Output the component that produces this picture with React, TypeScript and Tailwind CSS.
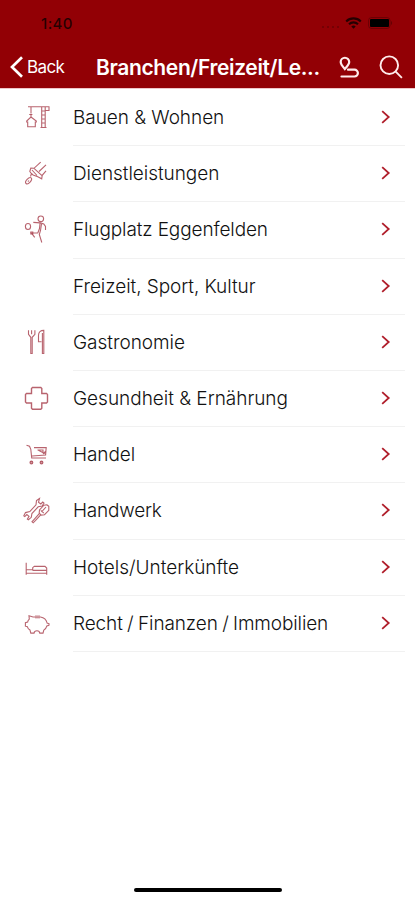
import React from "react";

type Row = { label: string; spacing: string; icon?: React.ReactNode };

const rows: Row[] = [
  {
    label: "Bauen & Wohnen",
    spacing: "tracking-[-0.05px]",
    icon: (
      <>
        <path d="M5 3.7H26.5M18.7 3.7V24.5M22.2 3.7V24.5M18.7 8h3.5M18.7 12h3.5M18.7 16h3.5M18.7 20h3.5M17.5 24.5h6M22.5 7.5h3.5V4M8 4v6.5M6.2 11.5h3.2" />
        <path d="M8 11.5v2.5L3.7 18v1h1v4.7h7.6V19h1v-1L8 14" />
      </>
    ),
  },
  {
    label: "Dienstleistungen",
    spacing: "tracking-[-0.05px]",
    icon: (
      <>
        <path d="M17.7 3.2L11 9.3 7.8 9l-1 3.5 1.6 2 1.7 1.5 4.7 1.8 3.9 2 .5-3.5L23 11.8M23 5.8l-7 6.7M11 9.3l8 7.3M9 11l5 5.5M8.5 14.5l-1 3" />
        <ellipse cx="5.6" cy="21.7" rx="2" ry="3.8" transform="rotate(42 5.6 21.7)" />
        <path d="M4.9 22.6l1-1.1" />
      </>
    ),
  },
  {
    label: "Flugplatz Eggenfelden",
    spacing: "tracking-[-0.12px]",
    icon: (
      <>
        <ellipse cx="5" cy="11.5" rx="2.6" ry="3" />
        <circle cx="17.8" cy="3.8" r="2.8" />
        <path d="M10.3 7.4l7 .5 3.5 1 1.7 2.5V15M17 8.5l-.5 5-1.7 4.5H8.5l3.2 4.3M18.5 9l-1 6.5-1.2 4 2.5 8" />
        <path d="M7.8 17h2v2h-2z" />
      </>
    ),
  },
  { label: "Freizeit, Sport, Kultur", spacing: "tracking-[-0.06px]" },
  {
    label: "Gastronomie",
    spacing: "tracking-[-0.03px]",
    icon: (
      <path d="M5.5 2.3v4l2.3 3v16.2h1.4V9.3l2.7-3v-4M8.6 2.3v4M18.5 13.8h-3V7.2c0-3 2-4.8 5.3-4.8v23.1h-1.4V5" />
    ),
  },
  {
    label: "Gesundheit & Ernährung",
    spacing: "tracking-[-0.02px]",
    icon: <path strokeWidth="1.4" d="M9.5 3.5h8.3l1 1v5h4.7l1 1V18l-1 1h-4.7v5.3l-1 1H9.5l-1-1V19H3.5l-1-1v-7.5l1-1h5v-5z" />,
  },
  {
    label: "Handel",
    spacing: "tracking-[-0.1px]",
    icon: (
      <>
        <path d="M3.5 5.3l3 1 1.3 3L8.7 18H23M11 7.6h12.2l-.6 7.4L9 16M14.5 10h5.5v3M15 10l7.5 4M20 14l3-3" />
        <circle cx="8.4" cy="22.5" r="1.4" fill="#a63c4a" fillOpacity=".5" />
        <circle cx="18.5" cy="22.5" r="1.4" fill="#a63c4a" fillOpacity=".5" />
      </>
    ),
  },
  {
    label: "Handwerk",
    spacing: "tracking-[-0.22px]",
    icon: (
      <>
        <path d="M16.5 2.5l-3 2-.5 4.3-6.2 6.8-4.3 1-1.7 3.2 1 .8 2-2 2.2 1.8-1.6 2.6 1 .7 2.9-2.4.6-3.7 6.3-6.8 4-.8 1.8-3-1.2-1-2 2-2.3-1.7z" />
        <path d="M23.8 8.8l2 1.5v4l-4.3 4.4-3.3.4-2-2 .3-3.2 4.4-4.7zM17.8 14.3l3 2.8M23 11l-4.5 5M16.5 17.3l-5.3 6-2.2 2.5 1.2 1 2.4-2.4 5.3-5.8" />
      </>
    ),
  },
  {
    label: "Hotels/Unterkünfte",
    spacing: "tracking-[-0.02px]",
    icon: (
      <path d="M3.2 9.8v12M3.2 16.7h6.5M3.2 20.3h20.5M11 13.4h11l1.7 1.7v6.7M9.7 17.4h14M9.7 17.4v-2.7l1.5-1.3" />
    ),
  },
  {
    label: "Recht / Finanzen / Immobilien",
    spacing: "tracking-[-0.12px] [word-spacing:-0.8px]",
    icon: (
      <>
        <path d="M6 6.8l4 1.2h7.5c3.8.6 6 3.4 6.6 6l2 .8-.2 1.6-2 .5c-.5 2-1.6 3.2-3.1 4.2l-.8 3h-3.2c-.3-3.2-5.3-3.2-5.8 0H7.8L7 21c-1.4-.8-2.2-1.8-2.6-3.2l-2-.6v-3.5l2.2-.6c.2-1.3.8-2.2 1.7-3z" />
        <path d="M12 8.9h5M12 6.9h5" strokeOpacity=".4" />
      </>
    ),
  },
];

function StatusBar() {
  return (
    <div className="flex h-[46px] items-center justify-between pl-[41px] pr-[22.5px] text-black/75">
      <span className="text-[15px] font-medium leading-none tracking-[0.4px]">1:40</span>
      <div className="flex items-center">
        <svg width="20" height="4" viewBox="0 0 20 4" className="mr-[4px] mt-[7px]" fill="currentColor" opacity=".35">
          <circle cx="2" cy="2" r="1" />
          <circle cx="7" cy="2" r="1" />
          <circle cx="12" cy="2" r="1" />
          <circle cx="17" cy="2" r="1" />
        </svg>
        <svg width="17" height="12" viewBox="0 0 17 12" className="mr-[6px]" fill="none" stroke="currentColor" strokeWidth="2.1">
          <path d="M1.2 4.4C5.2.4 11.8.4 15.8 4.4M4 7.2c2.5-2.4 6.5-2.4 9 0" />
          <path d="M8.5 11.8L6.3 9.5c1.2-1.2 3.2-1.2 4.4 0z" fill="currentColor" stroke="none" />
        </svg>
        <svg width="25" height="12" viewBox="0 0 25 12">
          <rect x=".5" y=".5" width="21.5" height="11" rx="3" fill="none" stroke="black" strokeOpacity=".25" />
          <rect x="2" y="2" width="19" height="8" rx="1" fill="black" />
          <path d="M23 4v4c1.5-.6 1.5-3.4 0-4z" fill="black" fillOpacity=".3" />
        </svg>
      </div>
    </div>
  );
}

export default function App() {
  return (
    <div className="flex h-[900px] w-[415px] flex-col overflow-hidden bg-white font-['Inter',sans-serif]">
      <header className="h-[89px] shrink-0 border-b border-[#efc6c9] bg-[#920005] text-white">
        <StatusBar />
        <div className="flex h-[42px] items-center">
          <button className="flex w-24 items-center pl-[9px]">
            <svg width="15" height="22" viewBox="0 0 15 22" fill="none" stroke="currentColor" strokeWidth="2.7">
              <path d="M13 1.2L3 11l10 9.8" />
            </svg>
            <span className="ml-[3px] text-[17px] leading-none tracking-[-0.6px]">Back</span>
          </button>
          <h1 className="w-[240px] whitespace-nowrap text-[21px] font-semibold leading-none tracking-[-0.36px]">
            Branchen/Freizeit/Le...
          </h1>
          <svg width="22" height="23" viewBox="0 0 22 23" className="ml-[2px]" fill="none" stroke="#ffecec" strokeWidth="2.2">
            <path d="M6.8 13C4.5 10.3 2.7 8.3 2.7 6a4.2 4.2 0 0 1 8.5 0c0 2.3-2 4.3-4.4 7z" />
            <path d="M10 13.7h6.5a3.4 3.4 0 0 1 0 6.8H3.5" strokeLinecap="round" />
          </svg>
          <svg width="24" height="24" viewBox="0 0 24 24" className="ml-[19px]" fill="none" stroke="#ffecec" strokeWidth="1.9">
            <circle cx="10.3" cy="10.2" r="8.8" />
            <path d="M16.7 16.6l6.2 6.2" />
          </svg>
        </div>
      </header>
      <main className="flex flex-col pt-px">
        {rows.map((row) => (
          <div key={row.label} className="flex h-[56.2px] items-stretch">
            <div className="flex w-[73px] items-center pb-[2px] pl-[23px]">
              {row.icon && (
                <svg width="28" height="28" viewBox="0 0 28 28" fill="none" stroke="#a63c4a" strokeWidth="1.1" strokeOpacity=".8" overflow="visible">
                  {row.icon}
                </svg>
              )}
            </div>
            <div className="mr-[10px] flex flex-1 items-center justify-between border-b border-[#f1f1f1] pr-[14.5px]">
              <span className={`whitespace-nowrap text-[19px] font-[350] leading-none text-[#111111] ${row.spacing}`}>
                {row.label}
              </span>
              <svg width="10" height="14" viewBox="0 0 10 14" className="mb-px" fill="none" stroke="#b01e2b" strokeWidth="1.8">
                <path d="M1.2 1.2L7.7 7l-6.5 5.8" />
              </svg>
            </div>
          </div>
        ))}
      </main>
      <div className="mx-auto mb-2 mt-auto h-1 w-[148px] shrink-0 rounded-full bg-black" />
    </div>
  );
}
